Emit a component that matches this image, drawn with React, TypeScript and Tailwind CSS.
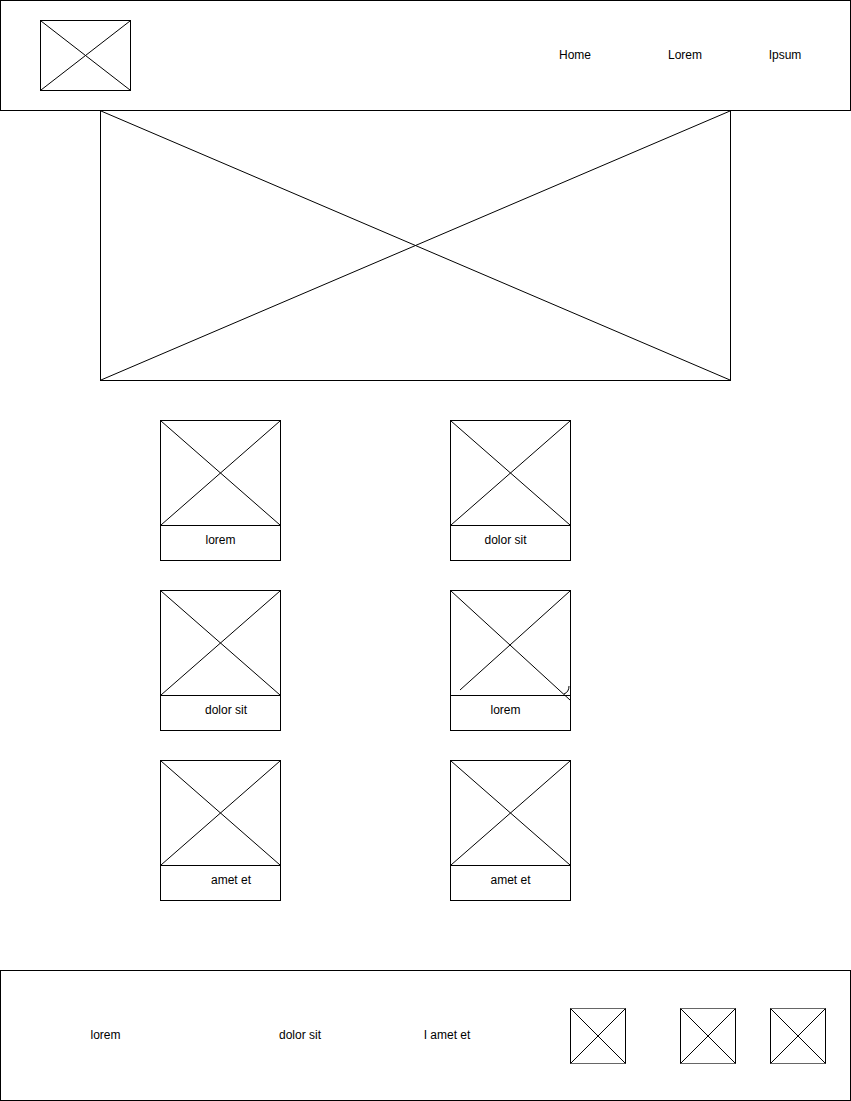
import React from "react";

type Card = { label: string; shift: string; odd?: boolean };

const CARDS: Card[] = [
  { label: "lorem", shift: "" },
  { label: "dolor sit", shift: "pr-[10px]" },
  { label: "dolor sit", shift: "pl-[11px]" },
  { label: "lorem", shift: "pr-[10px]", odd: true },
  { label: "amet et", shift: "pl-[21px]" },
  { label: "amet et", shift: "" },
];

// crossed-box placeholder, the usual wireframe "image here" mark
function Cross({ className = "" }: { className?: string }) {
  return (
    <svg className={`block w-full h-full ${className}`} viewBox="0 0 100 100" preserveAspectRatio="none">
      <line x1="0" y1="0" x2="100" y2="100" stroke="#000" strokeWidth="1" vectorEffect="non-scaling-stroke" />
      <line x1="100" y1="0" x2="0" y2="100" stroke="#000" strokeWidth="1" vectorEffect="non-scaling-stroke" />
    </svg>
  );
}

// the one card whose lines were dragged a bit off
function OddCross() {
  return (
    <svg className="block w-full h-full overflow-visible" viewBox="0 0 119 104" preserveAspectRatio="none">
      <path d="M0 0 L119 109" stroke="#000" fill="none" strokeWidth="1" />
      <path d="M119 0 L9 99" stroke="#000" fill="none" strokeWidth="1" />
      <path d="M118 95 Q118 101 113 103" stroke="#000" fill="none" strokeWidth="1" />
    </svg>
  );
}

function Thumb({ card }: { card: Card }) {
  return (
    <div className="w-[121px] h-[141px] border border-black flex flex-col">
      <div className="h-[105px] border-b border-black">{card.odd ? <OddCross /> : <Cross />}</div>
      <div className={`flex-1 flex items-center justify-center pb-[6px] ${card.shift}`}>{card.label}</div>
    </div>
  );
}

export default function App() {
  return (
    <div
      className="w-[851px] min-h-[1101px] bg-white text-black text-[12px] leading-[14px]"
      style={{ fontFamily: '"Liberation Sans", Arial, Helvetica, sans-serif' }}
    >
      {/* header */}
      <header className="h-[111px] border border-black flex items-center">
        <div className="ml-[39px] w-[91px] h-[71px] border border-black">
          <Cross />
        </div>
        <nav className="ml-[389px] pb-[2px] flex items-center">
          <span className="w-[110px] text-center">Home</span>
          <span className="w-[110px] text-center">Lorem</span>
          <span className="w-[90px] text-center">Ipsum</span>
        </nav>
      </header>

      {/* hero */}
      <div className="-mt-px ml-[100px] w-[631px] h-[271px] border border-black">
        <Cross />
      </div>

      {/* grid */}
      <div className="mt-[39px] ml-[160px] grid grid-cols-[121px_121px] gap-x-[169px] gap-y-[29px]">
        {CARDS.map((c, i) => (
          <Thumb key={i} card={c} />
        ))}
      </div>

      {/* footer */}
      <footer className="mt-[69px] h-[131px] border border-black flex items-center">
        <span className="w-[209px] pb-[2px] text-center">lorem</span>
        <span className="w-[180px] pb-[2px] text-center">dolor sit</span>
        <span className="w-[114px] pb-[2px] text-center">I amet et</span>
        <div className="ml-[66px] w-[56px] h-[56px] border border-black border-y-[#666]">
          <Cross />
        </div>
        <div className="ml-[54px] w-[56px] h-[56px] border border-black border-y-[#666]">
          <Cross />
        </div>
        <div className="ml-[34px] w-[56px] h-[56px] border border-black border-y-[#666]">
          <Cross />
        </div>
      </footer>
    </div>
  );
}
